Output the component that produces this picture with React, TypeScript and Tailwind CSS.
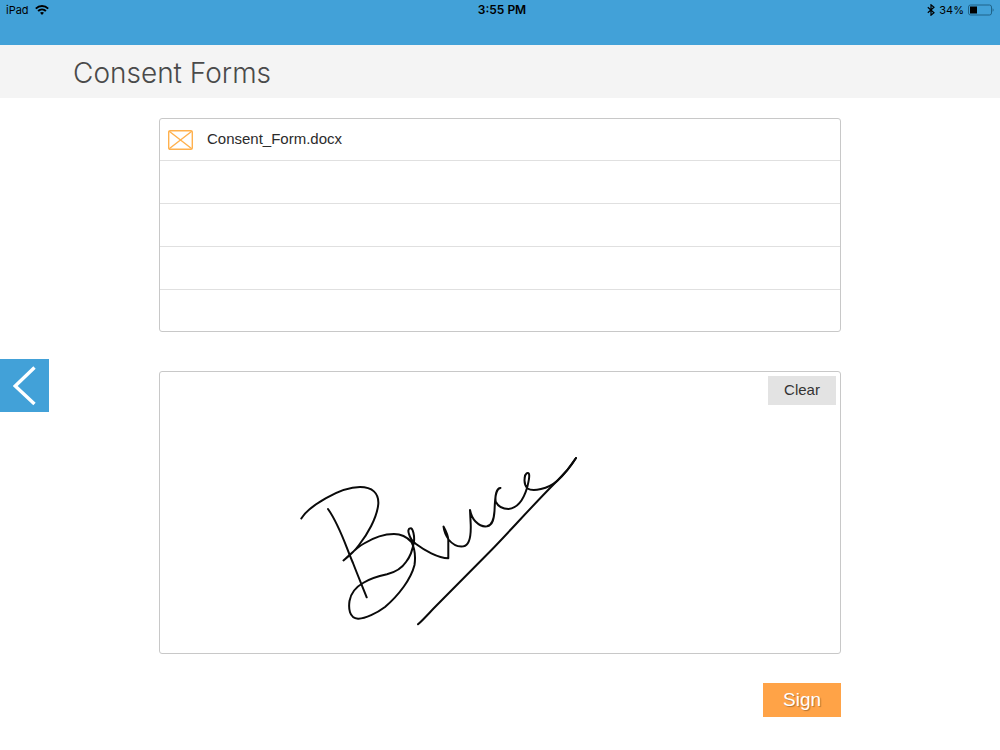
import { useState } from "react";

type FormFile = {
  name: string;
};

const files: FormFile[] = [{ name: "Consent_Form.docx" }];

const ROW_COUNT = 5;

const WifiIcon = () => (
  <svg viewBox="0 0 14 10" className="h-[10px] w-[14px]" fill="none" stroke="#000" strokeWidth="1.9" aria-hidden="true">
    <path d="M0.8 3.6C4.3 0.2 9.7 0.2 13.2 3.6" />
    <path d="M3.1 6C5.3 3.9 8.7 3.9 10.9 6" />
    <path d="M7 9.9L5 7.8C6.1 6.8 7.9 6.8 9 7.8Z" fill="#000" stroke="none" />
  </svg>
);

const BluetoothIcon = () => (
  <svg viewBox="0 0 8 12" className="h-[12px] w-[8px]" fill="none" stroke="#000" strokeWidth="1.2" aria-hidden="true">
    <path d="M0.8 3.2L7 8.7L4 11.2V0.8L7 3.3L0.8 8.8" />
  </svg>
);

const BatteryIcon = () => (
  <svg viewBox="0 0 26 12" className="h-[12px] w-[26px]" aria-hidden="true">
    <rect x="0.5" y="1" width="23" height="10" rx="2" fill="none" stroke="#1f6389" strokeWidth="1" />
    <rect x="2" y="2.5" width="7" height="7" fill="#000" />
    <path d="M24.6 4.2C26 4.8 26 7.2 24.6 7.8Z" fill="#1f6389" />
  </svg>
);

const EnvelopeIcon = () => (
  <svg viewBox="0 0 25 20" className="h-[20px] w-[25px] shrink-0" fill="none" stroke="#ffb14e" strokeWidth="1.4" aria-hidden="true">
    <rect x="0.7" y="0.7" width="23.6" height="18.6" rx="1.4" />
    <path d="M1.2 1.2L23.8 18.8M23.8 1.2L1.2 18.8" />
  </svg>
);

const StatusBar = () => (
  <header className="grid h-[45px] grid-cols-3 items-start bg-[#42a1d8] px-1.5 text-[11px] leading-5 text-black">
    <div className="flex items-center gap-1.5">
      <span>iPad</span>
      <WifiIcon />
    </div>
    <div className="pl-1 text-center text-[12px] font-semibold">3:55 PM</div>
    <div className="flex items-center justify-end gap-1">
      <BluetoothIcon />
      <span>34%</span>
      <BatteryIcon />
    </div>
  </header>
);

const Signature = () => (
  <svg
    viewBox="160 372 680 281"
    className="block w-full"
    fill="none"
    stroke="#0a0a0a"
    strokeWidth="2"
    strokeLinecap="round"
    strokeLinejoin="round"
    role="img"
    aria-label="Signature"
  >
    {/* stem */}
    <path d="M328 509C340 526 346 547 353 563C358 576 363 588 366.7 597.3" />
    {/* bowls, through to the end of the name */}
    <path d="M301.3 518.5C309 506 340 487 360 487C372 487 379 493 378.3 504C377 518 367 535 359 545C354 552 348 557 343.5 560.5C350 555 356 548 364 543.5C373 538 384 534 394 534C402 534 407 537 411.5 542C415 549 415.5 558 414.5 565C411 579 399 595 385 607C377 613 365 619 358 618.7C349 618 348.5 608 349.5 601C351 592 356 587 363 583C371 578 379 576 387 574.3C396 572 402 568 406 562C410 557 413 548 414 541.5C414.6 536 413 528 410.5 528.3C408 528.5 408 531.5 409 534C410 538 412 541 416 544C424 550 438 558 448.3 558.3V540C448 535 446 531 443.5 526.5C444 531 446 536 449 540C453 545 458 547 463.5 546.3C471 545 471 532 470.7 524L470 510C471 515 473 519 475.5 521.5C479 525 483 527 487 526.3C493 525 494 518 494.5 511C495 501 495 489 500.5 488C496 488 495 497 495.7 501.7C498 506 503 509 508.5 509C518 508 524 498 527 488C528 484 530 477 529 474C528 472 525 473 524.7 478C524 483 525 486 527.5 488.5C533 492 548 489 557 481C565 474 571 466 576 458" />
    {/* underline */}
    <path d="M576 458C567 472 561 477 555 483C533 505 510 531 490 551.5L436 606C430 612 424 619 418 624.3" />
  </svg>
);

export default function App() {
  const [signed, setSigned] = useState(true);

  return (
    <div className="relative min-h-screen bg-white font-['Inter','Liberation_Sans',sans-serif] text-[#333]">
      <StatusBar />

      <div className="flex h-[53px] items-center bg-[#f4f4f4] px-[7.3%] pt-0.5">
        <h1 className="text-[28px] leading-8 font-light text-[#4a4a4a]">Consent Forms</h1>
      </div>

      <main className="mx-auto flex w-[68.2%] flex-col pt-5">
        <ul className="divide-y divide-[#e0e0e0] rounded-[3px] border border-[#c8c8c8]">
          {Array.from({ length: ROW_COUNT }, (_, index) => {
            const file = files[index];
            return (
              <li key={index} className="flex h-[43px] items-center gap-3.5 px-2 first:h-[42px] last:h-[41px]">
                {file && (
                  <>
                    <EnvelopeIcon />
                    <a href="#" className="font-['Liberation_Sans',sans-serif] text-[15px] text-[#2b2b2b]">
                      {file.name}
                    </a>
                  </>
                )}
              </li>
            );
          })}
        </ul>

        <section className="relative mt-[39px] min-h-[283px] rounded-[3px] border border-[#c8c8c8]">
          {signed && <Signature />}
          <button
            type="button"
            onClick={() => setSigned(false)}
            className="absolute top-1 right-1 h-[29px] w-[68px] bg-[#e3e3e3] font-['Liberation_Sans',sans-serif] text-[15px] text-[#333]"
          >
            Clear
          </button>
        </section>

        <button
          type="button"
          className="mt-[29px] h-[34px] w-[78px] self-end bg-[#ffa347] font-['Liberation_Sans',sans-serif] text-[19px] text-white [text-shadow:1px_1px_1px_rgba(0,0,0,0.3)]"
        >
          Sign
        </button>
      </main>

      <button
        type="button"
        aria-label="Back"
        className="absolute top-[359px] left-0 flex h-[53px] w-[49px] items-center justify-center bg-[#42a1d8]"
      >
        <svg viewBox="0 0 24 40" className="h-[40px] w-[24px]" fill="none" stroke="#fff" strokeWidth="3.4">
          <path d="M21.5 1.5L2.2 20L21.5 38" />
        </svg>
      </button>
    </div>
  );
}
